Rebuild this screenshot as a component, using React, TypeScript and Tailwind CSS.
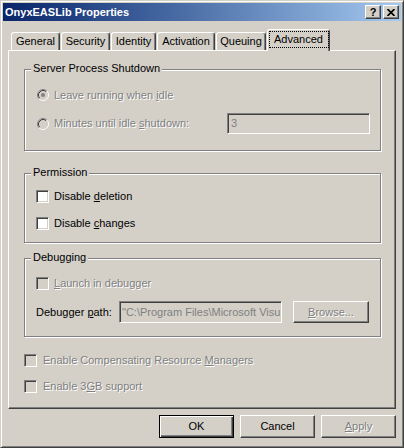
import React from "react";

const dis = "text-[#808080] [text-shadow:1px_1px_0_#fff]";

function Radio({ checked, disabled }: { checked?: boolean; disabled?: boolean }) {
  return (
    <svg width="12" height="12" viewBox="0 0 12 12" className="shrink-0">
      <circle cx="6" cy="6" r="4.5" fill={disabled ? "#d4d0c8" : "#fff"} />
      <path d="M2.11 9.89A5.5 5.5 0 0 1 9.89 2.11" stroke="#808080" fill="none" />
      <path d="M2.82 9.18A4.5 4.5 0 0 1 9.18 2.82" stroke="#404040" fill="none" />
      <path d="M9.89 2.11A5.5 5.5 0 0 1 2.11 9.89" stroke="#ffffff" fill="none" />
      <path d="M9.18 2.82A4.5 4.5 0 0 1 2.82 9.18" stroke="#d4d0c8" fill="none" />
      {checked && <circle cx="6" cy="6" r="2" fill={disabled ? "#808080" : "#000"} />}
    </svg>
  );
}

function Check({ disabled }: { disabled?: boolean }) {
  return (
    <div
      className={
        "w-[13px] h-[13px] shrink-0 border border-t-[#808080] border-l-[#808080] border-r-white border-b-white shadow-[inset_1px_1px_0_#404040,inset_-1px_-1px_0_#d4d0c8] " +
        (disabled ? "bg-[#d4d0c8]" : "bg-white")
      }
    />
  );
}

function Group({ label, h, children }: { label: string; h: string; children: React.ReactNode }) {
  return (
    <div className={"relative border border-[#808080] shadow-[inset_1px_1px_0_#fff,1px_1px_0_#fff] " + h}>
      <span className="absolute -top-[8px] left-[6px] bg-[#d4d0c8] px-[2px] leading-[13px] text-black">{label}</span>
      {children}
    </div>
  );
}

const raised =
  "border border-t-white border-l-white border-r-[#404040] border-b-[#404040] shadow-[inset_-1px_-1px_0_#808080]";

const sunken =
  "border border-t-[#808080] border-l-[#808080] border-r-white border-b-white shadow-[inset_1px_1px_0_#404040,inset_-1px_-1px_0_#d4d0c8]";

export default function App() {
  const tabs = [
    { label: "General", w: "w-[49px]" },
    { label: "Security", w: "w-[49px]" },
    { label: "Identity", w: "w-[45px]" },
    { label: "Activation", w: "w-[58px]" },
    { label: "Queuing", w: "w-[50px]" },
  ];
  return (
    <div className="w-[404px] h-[448px] bg-[#d4d0c8] border border-t-[#d4d0c8] border-l-[#d4d0c8] border-r-[#404040] border-b-[#404040] shadow-[inset_1px_1px_0_#fff,inset_-1px_-1px_0_#808080] p-[2px] flex flex-col font-['Liberation_Sans',Arial,sans-serif] text-[11px] text-black overflow-hidden">
      {/* Caption */}
      <div className="h-[18px] shrink-0 flex items-center bg-linear-to-r from-[#0a246a] to-[#a6caf0] pl-[2px] pr-[2px]">
        <span className="text-white font-bold leading-[13px]">OnyxEASLib Properties</span>
        <div className="ml-auto flex gap-[2px]">
          <div className={"w-[16px] h-[14px] bg-[#d4d0c8] flex items-center justify-center " + raised}>
            <span className="font-bold text-[11px] leading-[11px] text-black">?</span>
          </div>
          <div className={"w-[16px] h-[14px] bg-[#d4d0c8] flex items-center justify-center " + raised}>
            <svg width="8" height="7" viewBox="0 0 8 7">
              <path d="M0.5 0L7.5 7M7.5 0L0.5 7" stroke="#000" strokeWidth="1.7" />
            </svg>
          </div>
        </div>
      </div>

      <div className="px-[5px] pt-[8px] flex flex-col">
        {/* Tabs */}
        <div className="h-[21px] flex items-end gap-[1px] pl-[3px]">
          {tabs.map((t) => (
            <div
              key={t.label}
              className={
                "h-[18px] flex items-center justify-center leading-[13px] border-t border-l border-r border-t-white border-l-white border-r-[#404040] rounded-t-[3px] shadow-[inset_-1px_0_0_#808080] " +
                t.w
              }
            >
              {t.label}
            </div>
          ))}
          <div className="relative z-10 w-[63px] h-[22px] -mb-px bg-[#d4d0c8] flex justify-center border-t border-l border-r border-t-white border-l-white border-r-[#404040] rounded-t-[3px] shadow-[inset_-1px_0_0_#808080]">
            <span className="mt-[1px] w-[60px] h-[17px] border border-dotted border-black leading-[15px] text-center">Advanced</span>
          </div>
        </div>

        {/* Panel */}
        <div className={"w-[388px] h-[359px] flex flex-col pl-[15px] pr-[14px] " + raised}>
          <div className="mt-[18px]">
            <Group label="Server Process Shutdown" h="h-[82px]">
              <div className="flex flex-col pl-[12px] pr-[10px]">
                <div className="mt-[19px] h-[12px] flex items-center gap-[5px]">
                  <Radio checked disabled />
                  <span className={"leading-[13px] " + dis}>
                    Leave running when <span className="underline">i</span>dle
                  </span>
                </div>
                <div className="mt-[12px] h-[21px] flex items-center gap-[5px]">
                  <Radio disabled />
                  <span className={"leading-[13px] " + dis}>
                    Minutes until idle <span className="underline">s</span>hutdown:
                  </span>
                  <div className={"ml-auto w-[143px] h-[21px] bg-[#d4d0c8] flex items-center pl-[3px] text-[#808080] leading-[13px] " + sunken}>
                    3
                  </div>
                </div>
              </div>
            </Group>
          </div>

          <div className="mt-[22px]">
            <Group label="Permission" h="h-[70px]">
              <div className="flex flex-col pl-[11px]">
                <div className="mt-[16px] h-[13px] flex items-center gap-[5px]">
                  <Check />
                  <span className="leading-[13px]">
                    Disable <span className="underline">d</span>eletion
                  </span>
                </div>
                <div className="mt-[14px] h-[13px] flex items-center gap-[5px]">
                  <Check />
                  <span className="leading-[13px]">
                    Disable <span className="underline">c</span>hanges
                  </span>
                </div>
              </div>
            </Group>
          </div>

          <div className="mt-[15px]">
            <Group label="Debugging" h="h-[79px]">
              <div className="flex flex-col pl-[11px]">
                <div className="mt-[18px] h-[13px] flex items-center gap-[5px]">
                  <Check disabled />
                  <span className={"leading-[13px] " + dis}>
                    <span className="underline">L</span>aunch in debugger
                  </span>
                </div>
                <div className="mt-[11px] h-[22px] flex items-center">
                  <span className="w-[83px] leading-[13px]">
                    Debugger <span className="underline">p</span>ath:
                  </span>
                  <div className={"w-[163px] h-[22px] bg-[#d4d0c8] flex items-center pl-[2px] overflow-hidden whitespace-nowrap text-[#808080] leading-[13px] " + sunken}>
                    {'"C:\\Program Files\\Microsoft Visu'}
                  </div>
                  <div className={"ml-[11px] w-[76px] h-[22px] flex items-center justify-center leading-[13px] " + raised + " " + dis}>
                    <span>
                      <span className="underline">B</span>rowse...
                    </span>
                  </div>
                </div>
              </div>
            </Group>
          </div>

          <div className="mt-[17px] h-[13px] flex items-center gap-[6px]">
            <Check disabled />
            <span className={"leading-[13px] " + dis}>
              Enable Compensating Resource <span className="underline">M</span>anagers
            </span>
          </div>
          <div className="mt-[13px] h-[13px] flex items-center gap-[6px]">
            <Check disabled />
            <span className={"leading-[13px] " + dis}>
              Enable 3<span className="underline">G</span>B support
            </span>
          </div>
        </div>

        {/* Buttons */}
        <div className="mt-[6px] flex justify-end gap-[6px]">
          <div className="w-[75px] h-[23px] flex items-center justify-center leading-[13px] border border-black shadow-[inset_1px_1px_0_#fff,inset_-1px_-1px_0_#404040,inset_-2px_-2px_0_#808080]">
            OK
          </div>
          <div className={"w-[75px] h-[23px] flex items-center justify-center leading-[13px] " + raised}>Cancel</div>
          <div className={"w-[75px] h-[23px] flex items-center justify-center leading-[13px] " + raised + " " + dis}>
            <span>
              <span className="underline">A</span>pply
            </span>
          </div>
        </div>
      </div>
    </div>
  );
}
